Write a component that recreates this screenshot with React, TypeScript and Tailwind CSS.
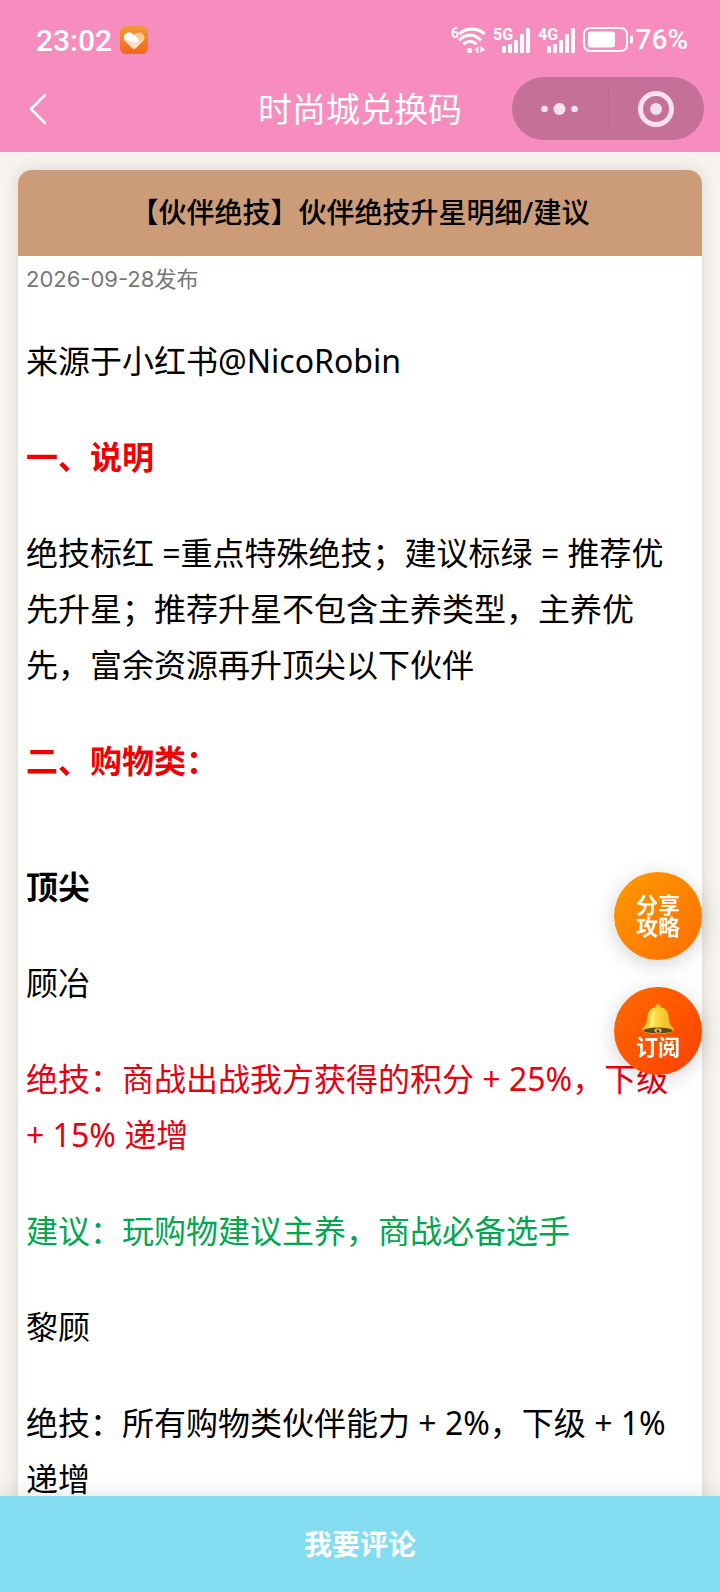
import type { ReactNode } from "react";

const RED = "text-[#e60012]";
const GREEN = "text-[#00a650]";

type Line = {
  text: string;
  className?: string;
};

const intro: Line[] = [
  { text: "来源于小红书@NicoRobin" },
  { text: "一、说明", className: "font-bold text-[#ee0000]" },
  {
    text: "绝技标红 =重点特殊绝技；建议标绿 = 推荐优先升星；推荐升星不包含主养类型，主养优先，富余资源再升顶尖以下伙伴",
  },
  { text: "二、购物类：", className: "font-bold text-[#ee0000]" },
];

const partners: Line[] = [
  { text: "顾冶" },
  { text: "绝技：商战出战我方获得的积分 + 25%，下级 + 15% 递增", className: RED },
  { text: "建议：玩购物建议主养，商战必备选手", className: GREEN },
  { text: "黎顾" },
  { text: "绝技：所有购物类伙伴能力 + 2%，下级 + 1% 递增" },
];

function SignalBars({ label }: { label: string }) {
  return (
    <svg width="39" height="28" viewBox="0 0 39 28" fill="white" aria-label={`${label} 信号`}>
      <text x="0" y="14" fontSize="16" fontWeight="700" fontFamily="Roboto, sans-serif">
        {label}
      </text>
      <rect x="9" y="20" width="4" height="7" rx="1" />
      <rect x="15" y="18" width="4" height="9" rx="1" />
      <rect x="21" y="14" width="4" height="13" rx="1" />
      <rect x="27" y="8" width="4" height="19" rx="1" />
      <rect x="33" y="2" width="4" height="25" rx="1" />
    </svg>
  );
}

function WifiIcon() {
  return (
    <svg width="36" height="28" viewBox="0 0 36 28" fill="none" stroke="white" aria-label="Wi-Fi">
      <text x="0" y="12" fontSize="14" fontWeight="700" fontFamily="Roboto, sans-serif" fill="white" stroke="none">
        6
      </text>
      <path d="M8.500 8C15 1.500 27 1.500 33.500 8" strokeWidth="3.4" />
      <path d="M8 14.500C14 7.500 24 7.500 30 14.500" strokeWidth="3.2" />
      <path d="M12.500 18.500C16 14.500 22 14.500 25.500 18.500" strokeWidth="3" />
      <circle cx="18.500" cy="24.500" r="2.600" fill="white" stroke="none" />
      <path d="M23 24l4.500-4v7h-2v-3zM29.500 20l5 4-3 1-2 2z" fill="white" stroke="none" />
    </svg>
  );
}

function BatteryIcon() {
  return (
    <svg width="51" height="28" viewBox="0 0 51 28" fill="none" aria-label="电池">
      <rect x="1" y="2" width="43" height="23" rx="6" stroke="white" strokeWidth="2" />
      <rect x="5" y="5.500" width="27" height="16" rx="3" fill="white" />
      <rect x="47" y="9.500" width="3" height="8" rx="1.500" fill="white" />
    </svg>
  );
}

function HeartAppIcon() {
  return (
    <svg width="28" height="28" viewBox="0 0 28 28" aria-hidden="true">
      <defs>
        <linearGradient id="heartBg" x1="0" y1="0" x2="0" y2="1">
          <stop offset="0" stopColor="#f29a35" />
          <stop offset="1" stopColor="#f2661c" />
        </linearGradient>
      </defs>
      <rect width="28" height="28" rx="6" fill="url(#heartBg)" />
      <path
        d="M14 9C16.500 6 21 6 23 8.500c2 2.500 1.500 5-.5 7l-7 7c-1 1-2 1-3 0l-7-7C3 12.500 3.500 9.500 6 7.500 9 5.500 12 6.500 14 9z"
        fill="#fde0c2"
      />
      <path d="M14 9C16.500 6 21 6 23 8.500c2 2.500 1.500 5 0 7l-5-1.500c0-2-2-3.500-4-5z" fill="#fbc793" />
      <path d="M14 9c2 1.500 4 3 4.500 5 .3 2.500-3 3-5.500 2L5 13C3.500 11 4 9 6 7.500 9 5.500 12 6.500 14 9z" fill="white" />
    </svg>
  );
}

function BellIcon() {
  return (
    <svg width="34" height="32" viewBox="0 0 34 32" aria-hidden="true">
      <defs>
        <linearGradient id="bellBody" x1="0" y1="0" x2="1" y2="0">
          <stop offset="0" stopColor="#f6b92b" />
          <stop offset="0.35" stopColor="#fde047" />
          <stop offset="1" stopColor="#efb01e" />
        </linearGradient>
      </defs>
      <circle cx="17" cy="3.500" r="2.500" fill="#f0b622" stroke="#dca31c" strokeWidth="1" />
      <path
        d="M17 4C10 4 7 8 6.500 13c-.4 5-1 9-5.500 13 0 3 7 5 16 5s16-2 16-5c-4.500-4-5.100-8-5.500-13C27 8 24 4 17 4z"
        fill="url(#bellBody)"
      />
      <path d="M12 9c-2 4-1.500 10-4 14l4 1c2-4 .5-10 2-15z" fill="#fff19a" opacity="0.7" />
      <ellipse cx="17" cy="27.500" rx="14.500" ry="3" fill="#5d4a20" />
      <path d="M13.500 27c0-2 7-2 7 0 0 4-7 4-7 0z" fill="#f4cb3c" />
      <circle cx="17" cy="28" r="1.500" fill="#3f3216" />
    </svg>
  );
}

function StatusBar() {
  return (
    <div className="flex h-[76px] items-center justify-between pt-1 pr-8 pl-9 font-[Roboto,sans-serif] text-white">
      <div className="flex items-center gap-2">
        <span className="text-[30px] font-medium">23:02</span>
        <HeartAppIcon />
      </div>
      <div className="flex items-center gap-[6px]">
        <WifiIcon />
        <SignalBars label="5G" />
        <SignalBars label="4G" />
        <div className="flex items-center gap-0.5">
          <BatteryIcon />
          <span className="text-[28px] leading-8 font-medium">76%</span>
        </div>
      </div>
    </div>
  );
}

function NavBar() {
  return (
    <div className="grid h-[76px] grid-cols-[1fr_auto_1fr] items-start px-4 pt-px text-white">
      <button type="button" aria-label="返回" className="flex h-16 w-11 items-center justify-center">
        <svg width="20" height="32" viewBox="0 0 20 32" fill="none" stroke="white" strokeWidth="2.500">
          <path d="M17 2L3 16l14 14" strokeLinecap="round" strokeLinejoin="round" />
        </svg>
      </button>
      <h1 className="text-[34px] leading-16">时尚城兑换码</h1>
      <div className="flex h-[63px] w-48 items-center justify-self-end rounded-full bg-[#c47098]">
        <button type="button" aria-label="更多" className="flex h-full flex-1 items-center justify-center">
          <svg width="40" height="14" viewBox="0 0 40 14" fill="#f9e0ec">
            <circle cx="4.500" cy="7" r="3.300" />
            <circle cx="19.500" cy="7" r="6" />
            <circle cx="34.500" cy="7" r="3.300" />
          </svg>
        </button>
        <span className="h-10 w-px bg-[#bd6b92]" />
        <button type="button" aria-label="关闭" className="flex h-full flex-1 items-center justify-center">
          <svg width="36" height="36" viewBox="0 0 36 36" fill="none">
            <circle cx="18" cy="18" r="15.500" stroke="#fbe0ed" strokeWidth="5" />
            <circle cx="18" cy="18" r="6" fill="#f3dfe9" />
          </svg>
        </button>
      </div>
    </div>
  );
}

function FloatingButton({ className, children }: { className: string; children: ReactNode }) {
  return (
    <button
      type="button"
      className={`flex size-[88px] flex-col items-center justify-center rounded-full pb-0.5 text-[22px] leading-[22px] font-bold text-white shadow-[0_4px_20px_rgba(0,0,0,0.18)] ${className}`}
    >
      {children}
    </button>
  );
}

export default function App() {
  return (
    <div className="flex h-dvh flex-col bg-[#f6f3ee] font-['Noto_Sans','Noto_Sans_CJK_SC',sans-serif] text-black">
      <header className="shrink-0 bg-[#f78dbe]">
        <StatusBar />
        <NavBar />
      </header>

      <main lang="zh-CN" className="min-h-0 flex-1 overflow-y-auto px-[18px] pt-[18px] [scrollbar-width:none]">
        <article className="overflow-hidden rounded-t-[14px] bg-white pb-10 shadow-[0_0_16px_rgba(0,0,0,0.12)]">
          <h2 className="bg-[#cc9c78] pb-0.5 text-center text-[28px] leading-[84px] font-medium">
            【伙伴绝技】伙伴绝技升星明细/建议
          </h2>
          <time className="block px-2 pt-px font-[Inter,'Noto_Sans_CJK_SC',sans-serif] text-[22px] leading-11 text-[#777777]">
            2026-09-28发布
          </time>
          <div className="px-2 pt-8 text-[32px] leading-14">
            {intro.map((line) => (
              <p key={line.text} className={`mb-10 ${line.className ?? ""}`}>
                {line.text}
              </p>
            ))}
            <h3 className="mt-[70px] mb-10 font-bold">顶尖</h3>
            {partners.map((line) => (
              <p key={line.text} className={`mb-10 ${line.className ?? ""}`}>
                {line.text}
              </p>
            ))}
          </div>
        </article>
      </main>

      <div className="fixed right-[18px] bottom-[517px] flex flex-col gap-[27px]">
        <FloatingButton className="bg-linear-to-br from-[#ff9a00] to-[#ff6d00]">
          <span>分享</span>
          <span>攻略</span>
        </FloatingButton>
        <FloatingButton className="bg-linear-to-br from-[#ff6a00] to-[#ff3d00]">
          <BellIcon />
          <span>订阅</span>
        </FloatingButton>
      </div>

      <button
        type="button"
        className="relative h-24 w-full shrink-0 bg-[#83dcf0] text-[28px] font-bold text-white shadow-[0_0_20px_rgba(0,0,0,0.12)]"
      >
        我要评论
      </button>
    </div>
  );
}
